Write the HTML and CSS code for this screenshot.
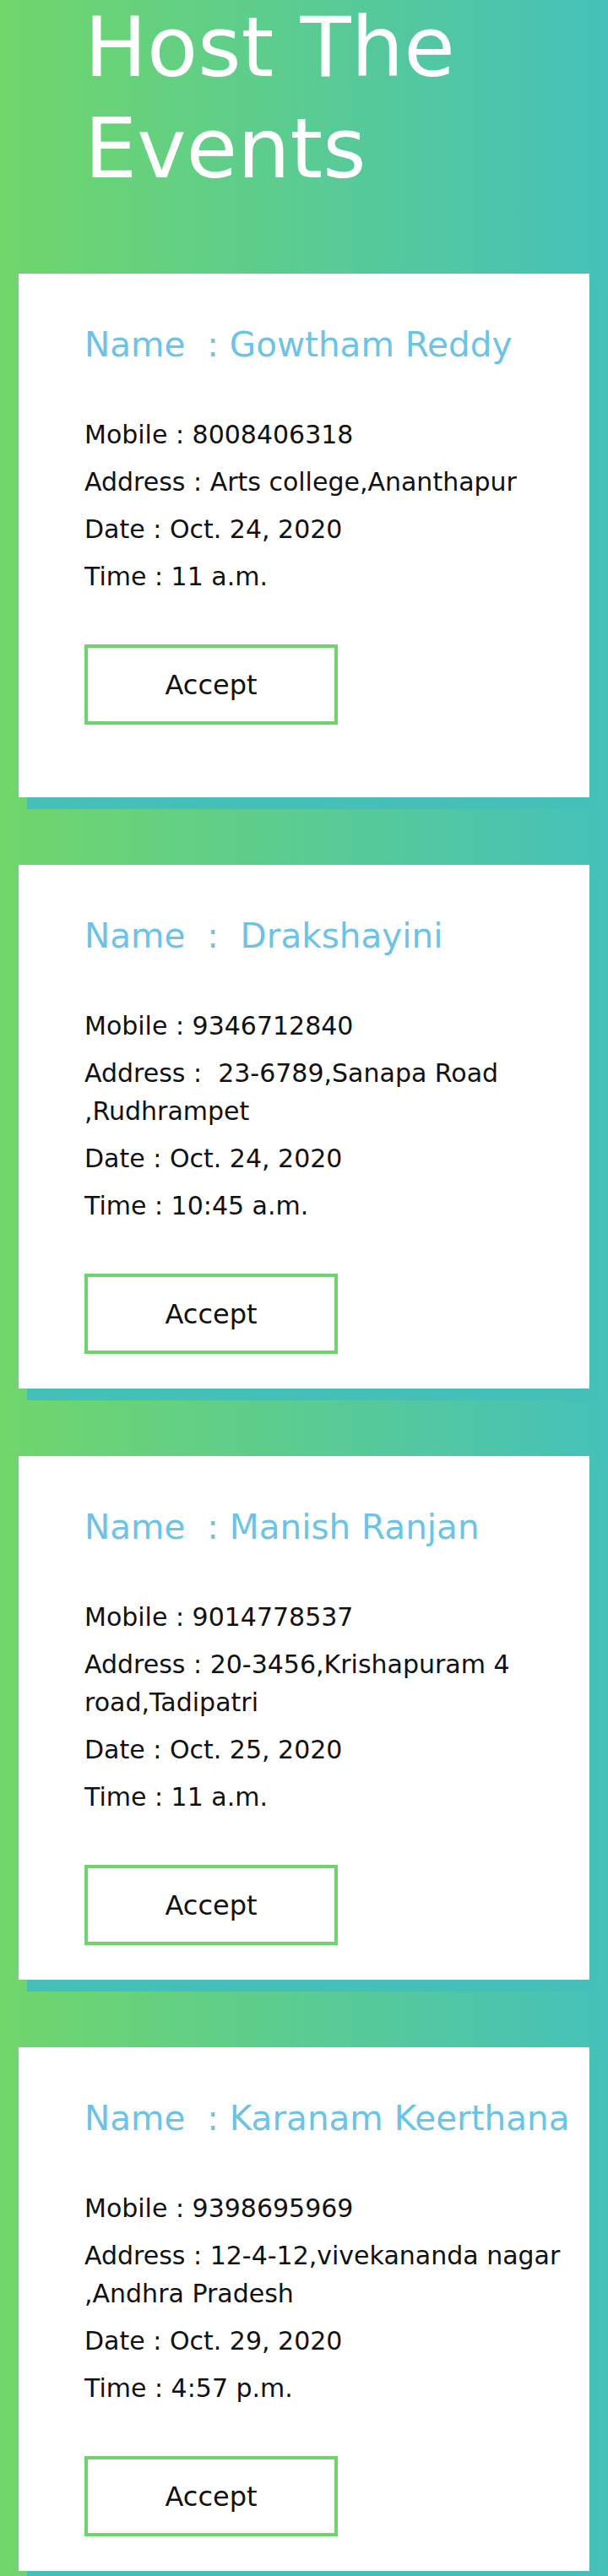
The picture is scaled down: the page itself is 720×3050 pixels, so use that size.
FILE: index.html
```html
<!DOCTYPE html>
<html lang="en">
<head>
  <meta charset="UTF-8" />
  <meta name="viewport" content="width=device-width, initial-scale=1.0" />
  <title>Host The Events</title>
  <link rel="stylesheet" href="styles.css">
</head>
<body>
  <h1 class="page-title">Host The Events</h1>

  <div class="events">
    <div class="event-card">
      <h3 class="event-name">Name&nbsp; : Gowtham Reddy</h3>
      <div class="event-info">
        <p>Mobile : 8008406318</p>
        <p>Address : Arts college,Ananthapur</p>
        <p>Date : Oct. 24, 2020</p>
        <p>Time : 11 a.m.</p>
      </div>
      <button class="accept-btn">Accept</button>
    </div>

    <div class="event-card">
      <h3 class="event-name">Name&nbsp; :&nbsp; Drakshayini</h3>
      <div class="event-info">
        <p>Mobile : 9346712840</p>
        <p>Address :&nbsp; 23-6789,Sanapa Road ,Rudhrampet</p>
        <p>Date : Oct. 24, 2020</p>
        <p>Time : 10:45 a.m.</p>
      </div>
      <button class="accept-btn">Accept</button>
    </div>

    <div class="event-card">
      <h3 class="event-name">Name&nbsp; : Manish Ranjan</h3>
      <div class="event-info">
        <p>Mobile : 9014778537</p>
        <p>Address : 20-3456,Krishapuram 4 road,Tadipatri</p>
        <p>Date : Oct. 25, 2020</p>
        <p>Time : 11 a.m.</p>
      </div>
      <button class="accept-btn">Accept</button>
    </div>

    <div class="event-card">
      <h3 class="event-name">Name&nbsp; : Karanam Keerthana</h3>
      <div class="event-info">
        <p>Mobile : 9398695969</p>
        <p>Address : 12-4-12,vivekananda nagar ,Andhra Pradesh</p>
        <p>Date : Oct. 29, 2020</p>
        <p>Time : 4:57 p.m.</p>
      </div>
      <button class="accept-btn">Accept</button>
    </div>
  </div>
</body>
</html>
```

FILE: styles.css
```css
html, body {
  margin: 0;
  padding: 0;
}

body {
  font-family: "DejaVu Sans", sans-serif;
  background: linear-gradient(to right, #70d66b, #45c1b9);
  color: #111;
}

.page-title {
  margin: -4px 0 88px;
  padding-left: 100px;
  font-size: 98.5px;
  line-height: 120px;
  font-weight: normal;
  color: #fff;
}

.events {
  display: flex;
  flex-direction: column;
  gap: 80px;
  padding: 0 22px 80px;
}

.event-card {
  height: 620px;
  box-sizing: border-box;
  padding: 60px 14px 0 78px;
  background: #fff;
  box-shadow: 10px 14px 0 #45c0b8;
}

.event-name {
  margin: 0 0 60px;
  font-size: 40.5px;
  line-height: 48px;
  font-weight: normal;
  color: #6cc3e6;
  white-space: nowrap;
}

.event-info {
  display: flex;
  flex-direction: column;
  gap: 11px;
}

.event-info p {
  margin: 0;
  font-size: 30px;
  line-height: 45px;
}

.accept-btn {
  display: block;
  margin-top: 58px;
  width: 300px;
  height: 95px;
  border: 4px solid #6dd46e;
  background: #fff;
  font-family: "DejaVu Sans", sans-serif;
  font-size: 32px;
  font-weight: normal;
  color: #111;
  cursor: pointer;
}
```
